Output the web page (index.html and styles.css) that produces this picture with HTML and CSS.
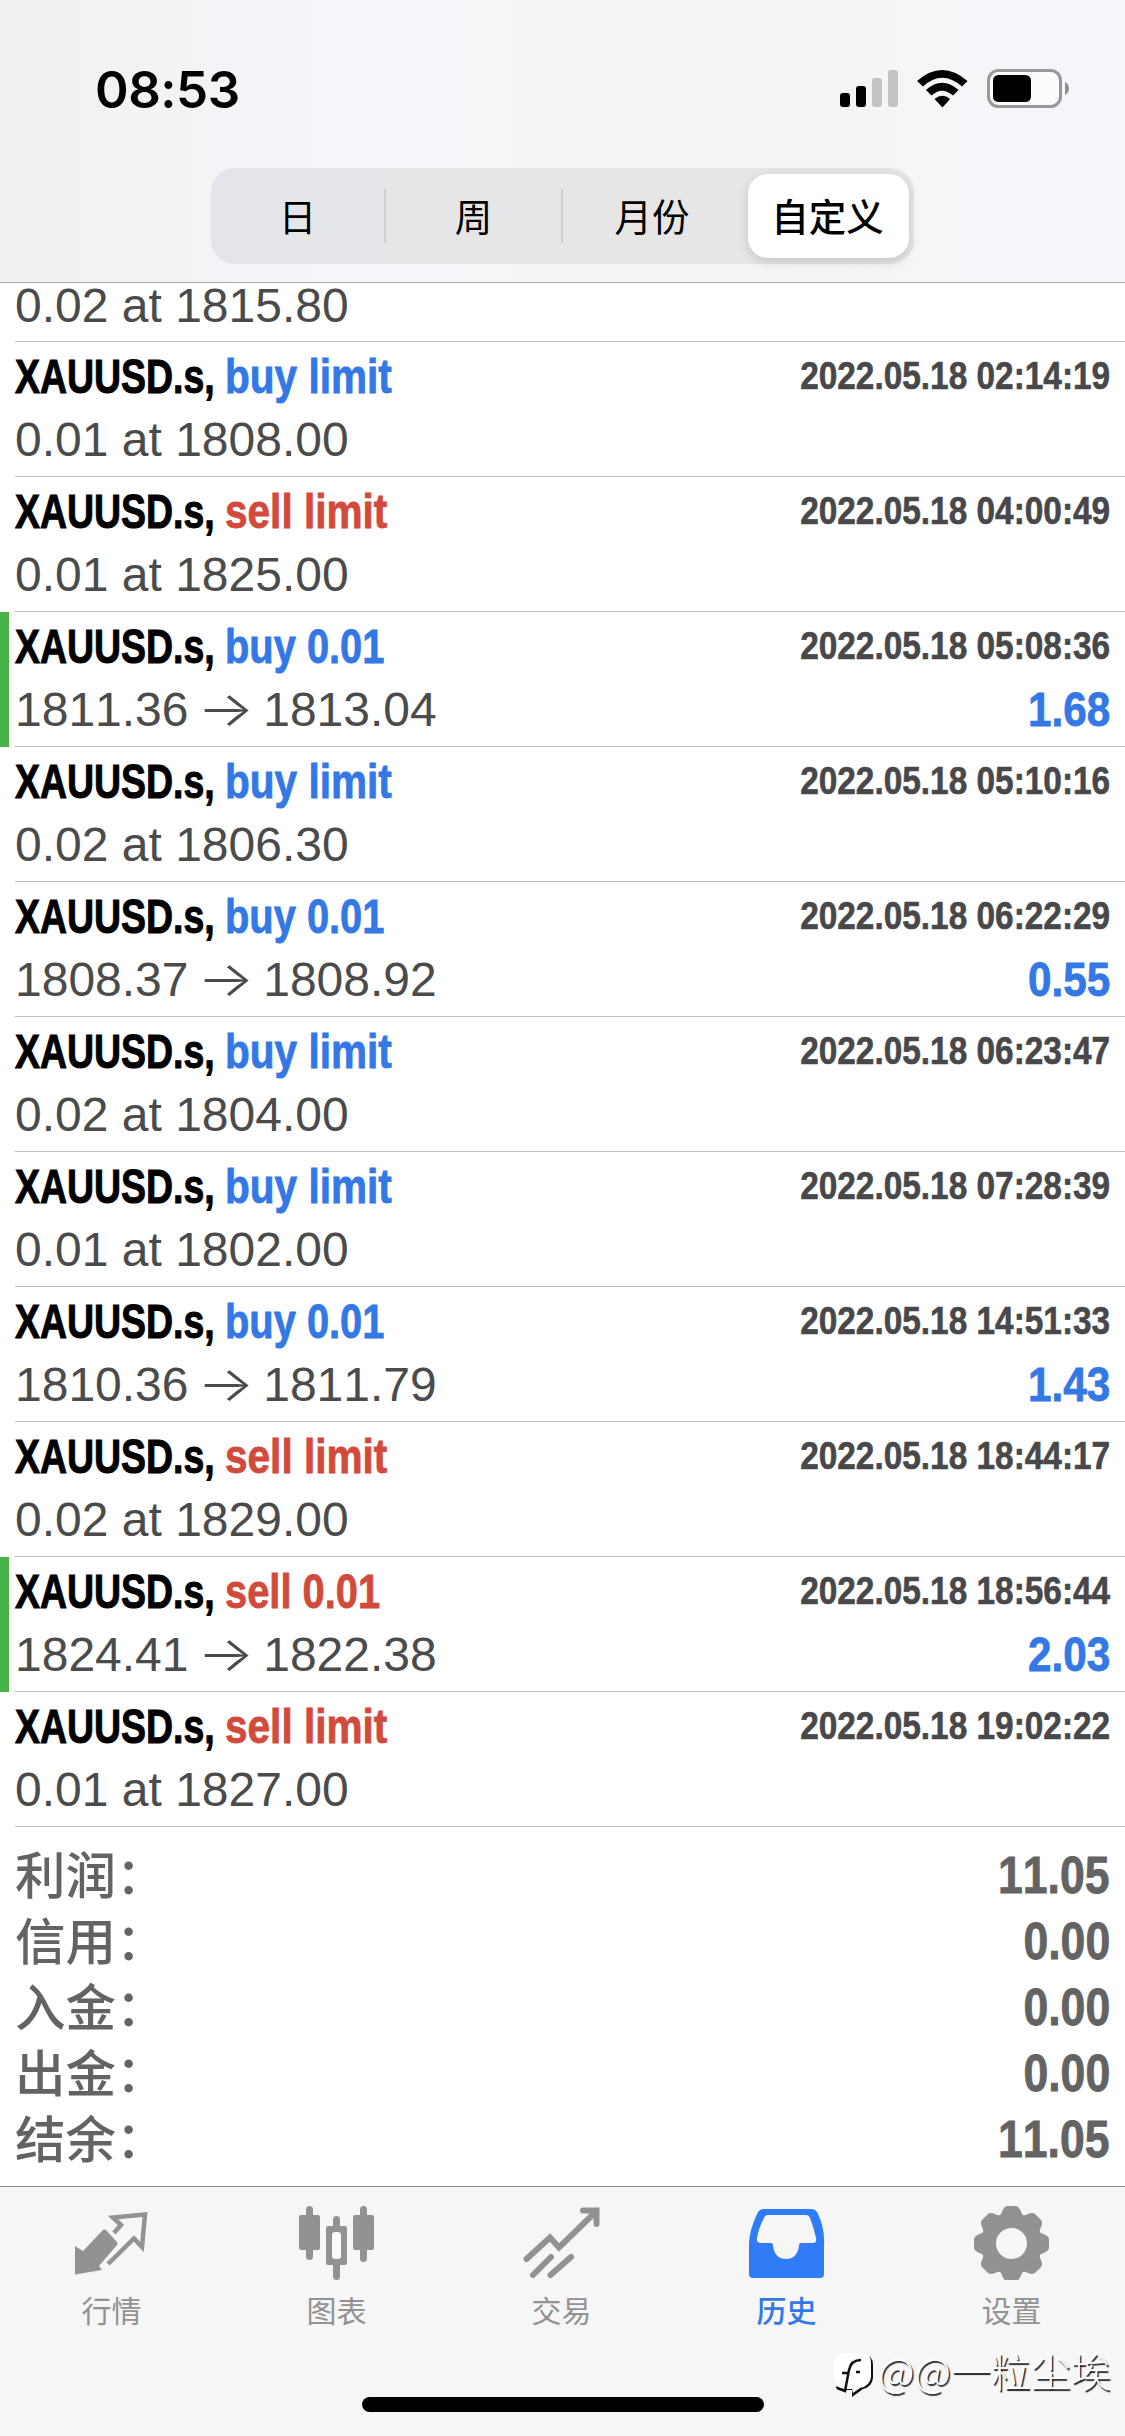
FILE: index.html
```html
<!DOCTYPE html>
<html lang="zh-CN">
<head>
<meta charset="utf-8">
<title>历史</title>
<link rel="stylesheet" href="styles.css">
</head>
<body>
<div class="app">
  <header class="header">
    <div class="status">
      <span class="clock">08:53</span>
      <svg class="status-icons" viewBox="0 0 232 42" width="232" height="42">
        <g>
          <rect x="0" y="25" width="10" height="14" rx="3"/>
          <rect x="16" y="18" width="10" height="21" rx="3"/>
          <rect x="32" y="10" width="10" height="29" rx="3" fill="#c4c4c6"/>
          <rect x="48" y="2" width="10" height="37" rx="3" fill="#c4c4c6"/>
        </g>
        <path d="M77 13 Q102 -9 127.500 13 L122 18.500 Q102 1 83 18.500Z"/>
        <path d="M86 22 Q102 7.500 118.500 22 L113 27.500 Q102 18 91.500 27.500Z"/>
        <path d="M94.500 31 Q102.500 24.500 110 31 L102.500 39.500Z"/>
        <rect x="148.500" y="2.500" width="72" height="36" rx="10" fill="#fbfbfd" stroke="#98989a" stroke-width="3"/>
        <rect x="153" y="7" width="38" height="27" rx="5.500"/>
        <path d="M225 14 Q229 16 229 20.500 Q229 25 225 27Z" fill="#8e8e90"/>
      </svg>
    </div>
    <nav class="segments">
      <span class="segment">日</span>
      <span class="segment">周</span>
      <span class="segment last">月份</span>
      <span class="segment selected">自定义</span>
    </nav>
  </header>

  <main class="history">
    <div class="row clipped"><span class="detail">0.02 at 1815.80</span></div>
    <div class="row"><span class="name"><b class="symbol">XAUUSD.s,</b><b class="side buy">buy limit</b></span><span class="date">2022.05.18 02:14:19</span><span class="detail">0.01 at 1808.00</span></div>
    <div class="row"><span class="name"><b class="symbol">XAUUSD.s,</b><b class="side sell">sell limit</b></span><span class="date">2022.05.18 04:00:49</span><span class="detail">0.01 at 1825.00</span></div>
    <div class="row marked"><span class="name"><b class="symbol">XAUUSD.s,</b><b class="side lots buy">buy 0.01</b></span><span class="date">2022.05.18 05:08:36</span><span class="detail">1811.36 <i class="arrow">→</i> 1813.04</span><span class="profit">1.68</span></div>
    <div class="row"><span class="name"><b class="symbol">XAUUSD.s,</b><b class="side buy">buy limit</b></span><span class="date">2022.05.18 05:10:16</span><span class="detail">0.02 at 1806.30</span></div>
    <div class="row"><span class="name"><b class="symbol">XAUUSD.s,</b><b class="side lots buy">buy 0.01</b></span><span class="date">2022.05.18 06:22:29</span><span class="detail">1808.37 <i class="arrow">→</i> 1808.92</span><span class="profit">0.55</span></div>
    <div class="row"><span class="name"><b class="symbol">XAUUSD.s,</b><b class="side buy">buy limit</b></span><span class="date">2022.05.18 06:23:47</span><span class="detail">0.02 at 1804.00</span></div>
    <div class="row"><span class="name"><b class="symbol">XAUUSD.s,</b><b class="side buy">buy limit</b></span><span class="date">2022.05.18 07:28:39</span><span class="detail">0.01 at 1802.00</span></div>
    <div class="row"><span class="name"><b class="symbol">XAUUSD.s,</b><b class="side lots buy">buy 0.01</b></span><span class="date">2022.05.18 14:51:33</span><span class="detail">1810.36 <i class="arrow">→</i> 1811.79</span><span class="profit">1.43</span></div>
    <div class="row"><span class="name"><b class="symbol">XAUUSD.s,</b><b class="side sell">sell limit</b></span><span class="date">2022.05.18 18:44:17</span><span class="detail">0.02 at 1829.00</span></div>
    <div class="row marked"><span class="name"><b class="symbol">XAUUSD.s,</b><b class="side lots sell">sell 0.01</b></span><span class="date">2022.05.18 18:56:44</span><span class="detail">1824.41 <i class="arrow">→</i> 1822.38</span><span class="profit">2.03</span></div>
    <div class="row"><span class="name"><b class="symbol">XAUUSD.s,</b><b class="side sell">sell limit</b></span><span class="date">2022.05.18 19:02:22</span><span class="detail">0.01 at 1827.00</span></div>
    <section class="summary">
      <div class="total"><span>利润：</span><b>11.05</b></div>
      <div class="total"><span>信用：</span><b>0.00</b></div>
      <div class="total"><span>入金：</span><b>0.00</b></div>
      <div class="total"><span>出金：</span><b>0.00</b></div>
      <div class="total"><span>结余：</span><b>11.05</b></div>
    </section>
  </main>

  <footer class="tabs">
    <div class="tab">
      <svg viewBox="0 0 80 80" width="80" height="80">
        <path d="M3 74V46L11 51 31 30Q32 29 34 30L45 42Q46 44 45 45L27 66 30 70 6 74Q3 75 3 74Z"/>
        <path d="M42 33 49 25 41 17.500 73 14.500 70 47 62 38.500 36 64" fill="none" stroke="#929292" stroke-width="4.500"/>
      </svg>
      <span>行情</span>
    </div>
    <div class="tab">
      <svg viewBox="0 0 80 80" width="80" height="80">
        <rect x="9" y="6" width="7" height="54" rx="3.500"/><rect x="2" y="15" width="21" height="35" rx="2"/>
        <rect x="36" y="16" width="7" height="64" rx="3.500"/><rect x="29" y="26" width="21" height="39" rx="2"/>
        <rect x="35" y="32" width="9" height="27" rx="3" fill="#fafafa"/>
        <rect x="63" y="6" width="7" height="56" rx="3.500"/><rect x="56" y="15" width="21" height="35" rx="2"/>
      </svg>
      <span>图表</span>
    </div>
    <div class="tab">
      <svg viewBox="0 0 80 80" width="80" height="80" fill="none" stroke="#929292" stroke-width="6" stroke-linecap="round">
        <path d="M4.500 59 28 37.500 37 47.500 73.500 12"/><path d="M61 10.500H74.500V24M11 75 29 57M28.500 75 49 57"/>
      </svg>
      <span>交易</span>
    </div>
    <div class="tab active">
      <svg viewBox="0 0 80 80" width="80" height="80">
        <path fill-rule="evenodd" d="M17 9H64Q69 9 71 14Q78 29 77 45V74Q77 78 73 78H6Q2 78 2 74V42Q3 29 10 14Q12 9 17 9ZM21 15Q18 15 17 18Q12 27 10 38Q9 43 14 43H24Q26 43 26 46Q28 59 39 59Q50 59 52 46Q52 43 54 43H66Q70 43 69 38Q67 28 63 18Q62 15 59 15Z"/>
      </svg>
      <span>历史</span>
    </div>
    <div class="tab">
      <svg viewBox="0 0 80 80" width="80" height="80">
        <g transform="translate(39.500 43.500)">
          <circle r="23" fill="none" stroke="#929292" stroke-width="15"/>
          <g id="teeth">
            <path id="tooth" d="M-13 -27Q-10 -29 -9 -33Q-7 -37.500 -4 -37.500H4Q7 -37.500 9 -33Q10 -29 13 -27Z"/>
            <use href="#tooth" transform="rotate(45)"/><use href="#tooth" transform="rotate(90)"/><use href="#tooth" transform="rotate(135)"/>
          </g>
          <use href="#teeth" transform="rotate(180)"/>
        </g>
      </svg>
      <span>设置</span>
    </div>
    <div class="home-indicator"></div>
    <div class="watermark">
      <svg viewBox="0 0 46 48" width="46" height="48">
        <path d="M12 4H31Q41 4 41 14V27Q40 36 31 38L20 46 20 39H12L4 37 6 30Z" fill="#111"/>
        <path d="M12 2H29Q39 2 39 12V26Q38 35 28 37L21 42 20 38H12Q2 37 2 27V12Q2 2 12 2Z" fill="#fff"/>
        <path d="M5 37 13 40 17 19Q19 9 29 9M10 22H17M24 21H28" fill="none" stroke="#111" stroke-width="2.500"/>
      </svg>
      <span>@@一粒尘埃</span>
    </div>
  </footer>
</div>
</body>
</html>
```
FILE: styles.css
```css
* { box-sizing: border-box; }

body {
  margin: 0;
  background: #fff;
  font-family: "Liberation Sans", "Noto Sans CJK SC", sans-serif;
  font-kerning: none;
}

.app {
  width: 1125px;
  height: 2436px;
  display: flex;
  flex-direction: column;
  overflow: hidden;
}

.header {
  height: 283px;
  flex: none;
  border-bottom: 1px solid #acacac;
  background: linear-gradient(90deg, #f0f0f1, #f5f6fa 30%, #f5f5f6 60%, #f5f6fa);
}

.status {
  height: 168px;
  padding: 68px 53px 0 95px;
  display: flex;
  justify-content: space-between;
}

.clock {
  font: 600 51px/43px Inter, sans-serif;
  font-kerning: auto;
  letter-spacing: -.5px;
}

.segments {
  width: 703px;
  height: 96px;
  margin-left: 211px;
  padding: 6px 5px 6px 0;
  display: grid;
  grid-template-columns: 175px 177px 185px 161px;
  align-items: center;
  border-radius: 24px;
  background: linear-gradient(90deg, #e4e5ea, #e6e6e7 50%);
  font: 400 37.500px/51px "Noto Sans CJK SC", sans-serif;
  color: #000;
  text-align: center;
}

.segment {
  height: 54px;
  border-right: 2px solid #cfcfd2;
}

.last {
  padding-right: 7px;
  border-right: 0;
}

.selected {
  height: 84px;
  padding-right: 2px;
  border: 0;
  border-radius: 20px;
  background: #fff;
  box-shadow: 0 4px 12px rgba(0, 0, 0, .14);
  font-weight: 500;
  line-height: 81px;
}

.history {
  height: 1903px;
  flex: none;
  background: #fff;
}

.row {
  height: 135px;
  padding: 3px 15px 0;
  display: grid;
  grid-template-columns: 1fr auto;
  grid-template-rows: 63px 63px;
  line-height: 64px;
  background: linear-gradient(#bdbdbd, #bdbdbd) 15px 134px / 1110px 1px no-repeat;
}

.clipped {
  height: 59px;
  display: block;
  background-position: 15px 58px;
  line-height: 45px;
  padding-top: 0;
}

.marked {
  padding-left: 6px;
  border-left: 9px solid #47b247;
  background-position: 6px 134px;
}

.name { display: flex; font-size: 48px; font-kerning: auto; }

.symbol {
  width: 210px;
  transform: scaleX(.78);
  transform-origin: left;
  -webkit-text-stroke: 1px;
}

.side {
  transform: scaleX(.845);
  transform-origin: left;
  white-space: nowrap;
  -webkit-text-stroke: .8px;
}

.lots { transform: scaleX(.83); }

.buy, .profit { color: #3478e5; }
.sell { color: #d24a3c; }

.date {
  font-size: 39px;
  font-weight: 700;
  line-height: 62px;
  color: #48484a;
  transform: scaleX(.856);
  transform-origin: right;
  -webkit-text-stroke: .6px;
}

.detail {
  font-size: 48px;
  color: #4b4b4b;
  white-space: nowrap;
}

.arrow {
  display: inline-block;
  width: 48px;
  font: 300 48px/50px Inter, sans-serif;
  text-align: center;
  transform: scaleX(1.250);
}

.profit {
  font-size: 48px;
  font-weight: 700;
  text-align: right;
  transform: scaleX(.88);
  transform-origin: right;
  -webkit-text-stroke: .8px;
}

.summary { padding: 16px 15px 0; }

.total {
  height: 66px;
  display: flex;
  justify-content: space-between;
  line-height: 66px;
  color: #636363;
}

.total span { font: 500 50.500px/58px "Noto Sans CJK SC", sans-serif; }

.total b {
  font-size: 51px;
  transform: scaleX(.875);
  transform-origin: right;
  -webkit-text-stroke: .8px;
}

.tabs {
  position: relative;
  height: 250px;
  flex: none;
  display: grid;
  grid-template-columns: repeat(5, 1fr);
  border-top: 1px solid #8a8a8a;
  background: #f6f6f6;
}

.tab {
  padding: 13px 2px 0 0;
  display: flex;
  flex-direction: column;
  align-items: center;
  font: 400 30px/40px "Noto Sans CJK SC", sans-serif;
  color: #929292;
  fill: #929292;
}

.tab span { margin-top: 9px; }
.active { color: #3478e5; fill: #2f7cf6; font-weight: 500; }

.home-indicator {
  position: absolute;
  left: 362px;
  top: 210px;
  width: 402px;
  height: 15px;
  border-radius: 8px;
  background: #000;
}

.watermark {
  position: absolute;
  left: 832px;
  top: 164px;
  display: flex;
  font: 300 40px/38px "Noto Sans CJK SC", sans-serif;
  color: #fff;
  text-shadow: 1.500px 1.500px 1px #222;
  white-space: nowrap;
}
```
